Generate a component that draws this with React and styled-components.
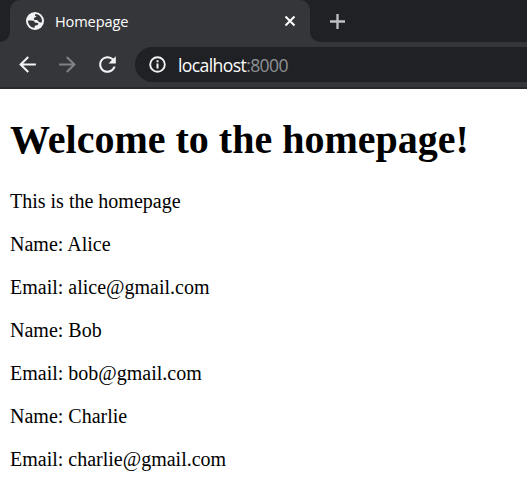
import React from "react";
import styled, { createGlobalStyle } from "styled-components";

const GlobalStyle = createGlobalStyle`
  body { margin: 0; background: #fff; overflow: hidden; }
`;
const Window = styled.div`
  height: 499px;
  overflow: hidden;
  background: #fff;
`;
const TabStrip = styled.div`
  display: flex;
  height: 42px;
  background: #35363a;
`;
const StripEdge = styled.div`
  width: 10px;
  background: #202124;
  border-bottom-right-radius: 10px;
`;
const TabSlot = styled.div`
  width: 300px;
  background: linear-gradient(#202124 12px, #35363a 12px);
`;
const Tab = styled.div`
  display: flex;
  align-items: center;
  box-sizing: border-box;
  height: 42px;
  padding: 0 13px 0 16px;
  border-radius: 10px 10px 0 0;
  background: #35363a;
`;
const TabTitle = styled.span`
  flex: 1;
  margin-left: 11px;
  color: #fff;
  font: 14.6px/20px "Open Sans", sans-serif;
  letter-spacing: -0.15px;
`;
const StripRest = styled.div`
  display: flex;
  flex: 1;
  align-items: center;
  padding-left: 19px;
  border-bottom-left-radius: 10px;
  background: #202124;
`;
const Toolbar = styled.div`
  display: flex;
  align-items: center;
  box-sizing: border-box;
  height: 47px;
  padding-left: 15px;
  border-bottom: 2px solid #28292c;
  background: #35363a;
`;
const NavButtons = styled.div`
  display: flex;
  gap: 15px;
  width: 120px;
`;
const AddressBar = styled.div`
  display: flex;
  flex: 1;
  align-items: center;
  height: 35px;
  padding-left: 10px;
  border-radius: 18px 0 0 18px;
  background: #202124;
`;
const Address = styled.span`
  margin-left: 8px;
  color: #fff;
  font: 17.6px/24px "Open Sans", sans-serif;
  letter-spacing: -0.62px;
`;
const Port = styled.span`
  color: #8f9295;
`;
const Glyph = styled.svg`
  display: block;
  flex: none;
  width: ${(p) => p.$size}px;
  height: ${(p) => p.$size}px;
  fill: ${(p) => p.$color || "#f1f3f4"};
`;
const Page = styled.main`
  padding: 0 10px;
  color: #000;
  font: 20px/22px "Liberation Serif", "Times New Roman", serif;
`;
const Heading = styled.h1`
  margin: 0;
  padding: 28px 0;
  font-size: 40px;
  line-height: 45px;
`;
const Line = styled.p`
  margin: 0 0 21px;
`;

const users = [
  { name: "Alice", email: "alice@gmail.com" },
  { name: "Bob", email: "bob@gmail.com" },
  { name: "Charlie", email: "charlie@gmail.com" },
];

export default function App() {
  return (
    <Window>
      <GlobalStyle />
      <TabStrip>
        <StripEdge />
        <TabSlot>
          <Tab>
            <Glyph $size={18} viewBox="0 0 18 18">
              <circle cx="9" cy="9" r="9" />
              <path
                fill="#35363a"
                d="M9.500 2C13.200 2.200 16 5.300 16 9l-.1 1c-.7.7-2.200.7-3 .1-.5-.4-.6-1.100-1.100-1.500-.9-.6-2.600 0-3.500-.8-.8-.8-.4-2 .6-2.300.8-.2 1.300-.1 1.500-.7.100-.5-.6-.7-1.100-1-.6-.4-.4-1.100.2-1.800zM2 8.600h4c1.700 0 2.700.9 2.900 2.100h2.200c1 0 1.400.8 1.100 1.600-.4 1-1.500 1-2.600 1.100-.8.1-1.100.8-1.100 2.500C4.700 15.700 2 12.700 2 8.600z"
              />
            </Glyph>
            <TabTitle>Homepage</TabTitle>
            <Glyph $size={14} viewBox="0 0 14 14">
              <path d="M2.500 2.500l9 9m0-9l-9 9" stroke="#fff" strokeWidth="2" />
            </Glyph>
          </Tab>
        </TabSlot>
        <StripRest>
          <Glyph $size={17} viewBox="0 0 17 17">
            <path d="M8.500 1v15M1 8.500h15" stroke="#bdc1c6" strokeWidth="2.300" />
          </Glyph>
        </StripRest>
      </TabStrip>
      <Toolbar>
        <NavButtons>
          <Glyph $size={25} viewBox="0 0 24 24">
            <path d="M20 11H7.830l5.590-5.590L12 4l-8 8 8 8 1.410-1.410L7.830 13H20v-2z" />
          </Glyph>
          <Glyph $size={25} $color="#818286" viewBox="0 0 24 24">
            <path d="M12 4l-1.410 1.410L16.170 11H4v2h12.170l-5.580 5.590L12 20l8-8z" />
          </Glyph>
          <Glyph $size={25} viewBox="0 0 24 24">
            <path d="M17.650 6.350C16.200 4.900 14.210 4 12 4c-4.420 0-7.990 3.580-7.990 8s3.570 8 7.990 8c3.730 0 6.840-2.550 7.730-6h-2.080c-.82 2.330-3.040 4-5.650 4-3.310 0-6-2.690-6-6s2.690-6 6-6c1.660 0 3.140.69 4.220 1.780L13 11h7V4l-2.350 2.350z" />
          </Glyph>
        </NavButtons>
        <AddressBar>
          <Glyph $size={25} viewBox="0 0 25 25">
            <circle cx="12.500" cy="12.500" r="7.300" fill="none" stroke="#f1f3f4" strokeWidth="1.900" />
            <path d="M11.500 11.500h2v5h-2zM11.500 8.300h2v2h-2z" />
          </Glyph>
          <Address>
            localhost<Port>:8000</Port>
          </Address>
        </AddressBar>
      </Toolbar>
      <Page>
        <Heading>Welcome to the homepage!</Heading>
        <Line>This is the homepage</Line>
        {users.map((user) => (
          <React.Fragment key={user.name}>
            <Line>Name: {user.name}</Line>
            <Line>Email: {user.email}</Line>
          </React.Fragment>
        ))}
      </Page>
    </Window>
  );
}
